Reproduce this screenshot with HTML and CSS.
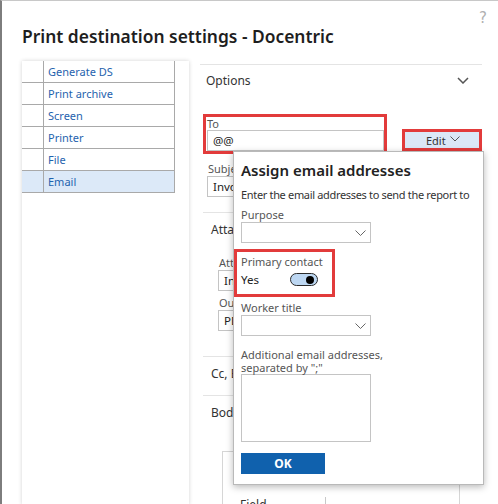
FILE: index.html
```html
<!DOCTYPE html>
<html>
<head>
<meta charset="utf-8">
<link rel="stylesheet" href="styles.css">
</head>
<body>
<div class="frame">
  <div class="topbar"><span class="help">?</span></div>
  <h1 class="title">Print destination settings - Docentric</h1>
  <div class="main">
    <div class="leftpanel">
      <div class="dest">
        <div class="drow"><span class="c0"></span><span class="c1">Generate DS</span></div>
        <div class="drow"><span class="c0"></span><span class="c1">Print archive</span></div>
        <div class="drow"><span class="c0"></span><span class="c1">Screen</span></div>
        <div class="drow"><span class="c0"></span><span class="c1">Printer</span></div>
        <div class="drow"><span class="c0"></span><span class="c1">File</span></div>
        <div class="drow sel"><span class="c0"></span><span class="c1">Email</span></div>
      </div>
    </div>
    <div class="content">
      <div class="options-head">
        <span>Options</span>
        <svg class="chev-lg" width="12" height="7" viewBox="0 0 12 7"><path d="M1 1 L6 6 L11 1" fill="none" stroke="#555" stroke-width="1.5"/></svg>
      </div>
      <div class="to-row">
        <div class="hl to-box">
          <div class="lbl">To</div>
          <div class="input">@@</div>
        </div>
        <div class="hl edit-box">
          <span>Edit</span>
          <svg width="10" height="6" viewBox="0 0 10 6"><path d="M0.5 0.5 L5 5 L9.5 0.5" fill="none" stroke="#555" stroke-width="1"/></svg>
        </div>
      </div>
      <div class="field subject">
        <div class="lbl">Subject</div>
        <div class="input wide">Invoice</div>
      </div>
      <div class="section">
        <div class="sec-title">Attachments</div>
        <div class="field sub first">
          <div class="lbl">Attachment</div>
          <div class="input">Invoice</div>
        </div>
        <div class="field sub second">
          <div class="lbl">Output format</div>
          <div class="input">PDF</div>
        </div>
      </div>
      <div class="section short">
        <div class="sec-title">Cc, Bcc</div>
      </div>
      <div class="section body-sec">
        <div class="sec-title">Body</div>
        <div class="grid">
          <div class="grid-row"><span class="gcell">Field</span><span class="gcell2"></span></div>
        </div>
      </div>

      <div class="popup">
        <div class="pop-title">Assign email addresses</div>
        <div class="pop-desc">Enter the email addresses to send the report to</div>
        <div class="plbl">Purpose</div>
        <div class="select"><svg width="11" height="6" viewBox="0 0 11 6"><path d="M0.5 0.5 L5.5 5.5 L10.5 0.5" fill="none" stroke="#666" stroke-width="1"/></svg></div>
        <div class="hl primary">
          <div class="plbl">Primary contact</div>
          <div class="toggle-row">
            <span class="yes">Yes</span>
            <span class="toggle"><span class="knob"></span></span>
          </div>
        </div>
        <div class="plbl worker">Worker title</div>
        <div class="select"><svg width="11" height="6" viewBox="0 0 11 6"><path d="M0.5 0.5 L5.5 5.5 L10.5 0.5" fill="none" stroke="#666" stroke-width="1"/></svg></div>
        <div class="plbl addl">Additional email addresses,<br>separated by ";"</div>
        <div class="textarea"></div>
        <div class="ok">OK</div>
      </div>
    </div>
  </div>
</div>
</body>
</html>
```

FILE: styles.css
```css
html, body {
  margin: 0;
  padding: 0;
  background: #ffffff;
}
body {
  width: 498px;
  height: 504px;
  overflow: hidden;
  font-family: "Noto Sans", "Open Sans", sans-serif;
  color: #333;
}
.frame {
  height: 504px;
  border-top: 1px solid #c8c8c8;
  border-left: 2px solid #7d7d7d;
  box-sizing: border-box;
  overflow: hidden;
}
.topbar {
  height: 22px;
  display: flex;
  justify-content: flex-end;
  padding-right: 11px;
}
.help {
  font-family: "DejaVu Sans", sans-serif;
  font-size: 15px;
  line-height: 15px;
  margin-top: 10px;
  color: #b0b0b0;
  height: 15px;
}
.title {
  margin: 1px 0 13px 0;
  padding-left: 20px;
  font-size: 17.4px;
  line-height: 24px;
  font-weight: 600;
  color: #1e1e1e;
}
.main {
  display: flex;
  height: 444px;
}
.leftpanel {
  margin-left: 20px;
  width: 167px;
  background: #fff;
  box-shadow: 0 0 4px rgba(0,0,0,0.18);
  flex: none;
}
.dest {
  width: 153px;
}
.drow {
  display: flex;
  height: 22px;
  box-sizing: border-box;
  border-bottom: 1px solid #a9a9a9;
  border-right: 1px solid #a9a9a9;
  font-size: 11px;
  color: #1f63ae;
  align-items: center;
}
.drow.sel {
  background: #dce9f8;
}
.c0 {
  width: 21px;
  height: 100%;
  border-right: 1px solid #a9a9a9;
  flex: none;
}
.c1 {
  padding-left: 4px;
  line-height: 21px;
}
.content {
  position: relative;
  margin-left: 11px;
  width: 282px;
  flex: none;
}
.options-head {
  margin-top: 3px;
  border-top: 1px solid #e4e4e4;
  height: 32px;
  box-sizing: border-box;
  display: flex;
  align-items: center;
  justify-content: space-between;
  padding: 0 13px 0 6px;
  font-size: 12px;
  color: #333;
}
.to-row {
  display: flex;
  align-items: flex-start;
  margin-top: 18px;
}
.hl {
  border: 3px solid #e23b3b;
  box-sizing: border-box;
}
.to-box {
  margin-left: 3px;
  width: 185px;
  height: 40px;
}
.lbl {
  font-size: 11px;
  line-height: 13px;
  color: #555;
  padding-left: 1px;
}
.input {
  box-sizing: border-box;
  height: 21px;
  border: 1px solid #c4c4c4;
  font-size: 11.5px;
  line-height: 19px;
  padding-left: 5px;
  color: #222;
}
.to-box .input {
  margin-left: 1px;
}
.edit-box {
  margin-left: 15px;
  margin-top: 15px;
  width: 81px;
  height: 22px;
  background: #dbe8f7;
  display: flex;
  align-items: center;
  justify-content: center;
  gap: 4px;
  font-size: 11px;
  color: #333;
  padding-left: 2px;
}
.edit-box svg {
  margin-top: -3px;
}
.field.subject {
  margin-top: 8px;
  margin-left: 7px;
}
.field .lbl {
  line-height: 14px;
}
.field.subject .input {
  width: 230px;
}
.section {
  margin-top: 15px;
  margin-left: 3px;
  border-top: 1px solid #e4e4e4;
  padding-top: 9px;
  height: 144px;
  box-sizing: border-box;
}
.sec-title {
  font-size: 12px;
  line-height: 16px;
  padding-left: 8px;
  color: #333;
}
.field.sub {
  margin-left: 15px;
}
.field.sub.first {
  margin-top: 18px;
}
.field.sub.second {
  margin-top: 5px;
}
.field.sub .input {
  width: 150px;
}
.section.short {
  margin-top: 0;
  height: 39px;
}
.section.body-sec {
  margin-top: 0;
  height: 120px;
}
.grid {
  margin-top: 30px;
  margin-left: 19px;
  width: 238px;
  height: 80px;
  box-sizing: border-box;
  border: 1px solid #d6d6d6;
  border-bottom: none;
  padding-top: 45px;
}
.grid-row {
  display: flex;
  font-size: 12px;
  color: #333;
}
.gcell {
  width: 103px;
  padding-left: 17px;
  box-sizing: border-box;
  border-right: 1px solid #c8c8c8;
  line-height: 16px;
}
.popup {
  position: absolute;
  left: 33px;
  top: 90px;
  width: 251px;
  height: 334px;
  box-sizing: border-box;
  background: #fff;
  border: 1px solid #b9b9b9;
  box-shadow: 0 2px 7px rgba(0,0,0,0.28);
  padding: 8px 0 0 7px;
}
.pop-title {
  font-size: 15px;
  line-height: 20px;
  font-weight: 600;
  color: #222;
}
.pop-desc {
  margin-top: 7px;
  font-size: 11px;
  line-height: 16px;
  color: #333;
  letter-spacing: -0.33px;
}
.plbl {
  margin-top: 4px;
  font-size: 11px;
  line-height: 15px;
  color: #555;
}
.select {
  box-sizing: border-box;
  width: 130px;
  height: 21px;
  border: 1px solid #c4c4c4;
  display: flex;
  align-items: center;
  justify-content: flex-end;
  padding-right: 4px;
}
.primary {
  margin-top: 6px;
  margin-left: -7px;
  width: 101px;
  height: 48px;
  padding: 0 0 0 4px;
}
.primary .plbl {
  margin-top: 2px;
}
.toggle-row {
  display: flex;
  align-items: center;
  height: 21px;
}
.yes {
  width: 49px;
  font-size: 11.5px;
  color: #222;
}
.toggle {
  box-sizing: border-box;
  width: 28px;
  height: 13px;
  border: 1px solid #2b2b2b;
  border-radius: 7px;
  background: #bdd7f2;
  display: flex;
  align-items: center;
  justify-content: flex-end;
  padding-right: 3px;
}
.knob {
  width: 8px;
  height: 8px;
  border-radius: 50%;
  background: #000;
}
.plbl.worker {
  margin-top: 3px;
}
.plbl.addl {
  margin-top: 12px;
  line-height: 13px;
}
.textarea {
  box-sizing: border-box;
  width: 130px;
  height: 68px;
  border: 1px solid #c4c4c4;
}
.ok {
  margin-top: 11px;
  width: 84px;
  height: 21px;
  background: #1061ad;
  color: #fff;
  font-weight: 700;
  font-size: 12px;
  line-height: 21px;
  text-align: center;
}
```
